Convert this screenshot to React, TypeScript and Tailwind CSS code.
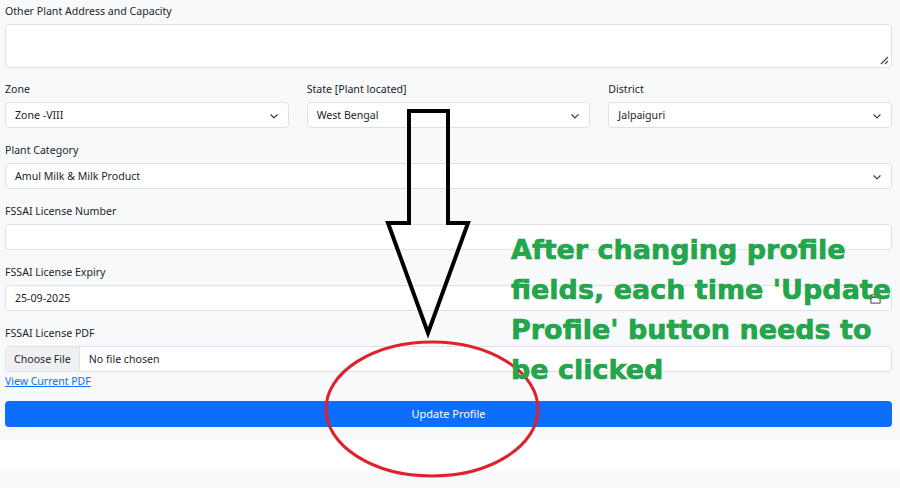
import React from "react";

const font = { fontFamily: '"Noto Sans", "Open Sans", sans-serif' };

function Label({ children }: { children: React.ReactNode }) {
  return <div className="h-[18px] leading-[18px] mb-[4px] text-[10.6px] text-[#212529]">{children}</div>;
}

function Chevron() {
  return (
    <svg width="10" height="10" viewBox="0 0 16 16" className="shrink-0">
      <path d="M3 6l5 5 5-5" fill="none" stroke="#343a40" strokeWidth="1.8" strokeLinecap="round" strokeLinejoin="round" />
    </svg>
  );
}

function Select({ value }: { value: string }) {
  return (
    <div className="h-[26px] bg-white border border-[#dee2e6] rounded-[4px] flex items-center justify-between pl-[9px] pr-[9px] pt-[1px] text-[10.6px] text-[#212529]">
      <span>{value}</span>
      <Chevron />
    </div>
  );
}

function Input({ value, children }: { value?: string; children?: React.ReactNode }) {
  return (
    <div className="h-[26px] bg-white border border-[#dee2e6] rounded-[4px] flex items-center justify-between pl-[9px] pr-[10px] pt-[1px] text-[10.6px] text-[#212529]">
      <span>{value}</span>
      {children}
    </div>
  );
}

export default function App() {
  return (
    <div className="relative w-[900px] h-[488px] overflow-hidden bg-white" style={font}>
      {/* Form card */}
      <div className="bg-[#f8f9fa] pt-[2px] pl-[5px] pr-[8px] pb-[12px] shadow-[0_1px_3px_rgba(0,0,0,0.15)]">
        <Label>Other Plant Address and Capacity</Label>
        <div className="relative h-[44px] bg-white border border-[#dee2e6] rounded-[4px]">
          <svg width="9" height="9" viewBox="0 0 9 9" className="absolute right-[2px] bottom-[2px]">
            <path d="M8 1L1 8M8 5L5 8" stroke="#444" strokeWidth="1.2" />
          </svg>
        </div>

        <div className="grid grid-cols-3 gap-x-[18px] mt-[12px]">
          <div>
            <Label>Zone</Label>
            <Select value="Zone -VIII" />
          </div>
          <div>
            <Label>State [Plant located]</Label>
            <Select value="West Bengal" />
          </div>
          <div>
            <Label>District</Label>
            <Select value="Jalpaiguri" />
          </div>
        </div>

        <div className="mt-[13px]">
          <Label>Plant Category</Label>
          <Select value="Amul Milk & Milk Product" />
        </div>

        <div className="mt-[13px]">
          <Label>FSSAI License Number</Label>
          <Input />
        </div>

        <div className="mt-[13px]">
          <Label>FSSAI License Expiry</Label>
          <Input value="25-09-2025">
            <svg width="11" height="11" viewBox="0 0 12 12">
              <rect x="1" y="2" width="10" height="9" fill="none" stroke="#333" strokeWidth="1" />
              <path d="M1 4.5h10" stroke="#333" strokeWidth="1.5" />
            </svg>
          </Input>
        </div>

        <div className="mt-[13px]">
          <Label>FSSAI License PDF</Label>
          <div className="h-[26px] bg-white border border-[#dee2e6] rounded-[4px] flex items-center text-[10.6px] text-[#212529] overflow-hidden">
            <div className="h-full flex items-center px-[8px] pt-[1px] bg-[#eef0f2] border-r border-[#dee2e6]">Choose File</div>
            <span className="pl-[9px] pt-[1px]">No file chosen</span>
          </div>
        </div>

        <div className="h-[18px] leading-[18px] text-[10.5px] text-[#0d6efd] underline">View Current PDF</div>

        <div className="mt-[11px] h-[26px] rounded-[4px] bg-[#0d6efd] flex items-center justify-center text-white text-[11px]">
          Update Profile
        </div>
      </div>

      <div className="h-[32px] bg-white" />
      <div className="h-[20px] bg-[#f8f9fa]" />

      {/* Annotation overlay */}
      <svg width="900" height="488" className="absolute inset-0 pointer-events-none">
        <path
          d="M409 111 H448 V223 H468 L428 333 L388 223 H409 Z"
          fill="none"
          stroke="#000"
          strokeWidth="4"
          strokeLinejoin="miter"
        />
        <ellipse cx="432" cy="409" rx="106" ry="67" fill="none" stroke="#e0202a" strokeWidth="3" />
      </svg>
      <div
        className="absolute left-[511px] top-[230px] text-[#22a84b] font-bold text-[27px] leading-[40px] [-webkit-text-stroke:0.6px_#1e9a45]"
        style={{ fontFamily: '"DejaVu Sans", Verdana, sans-serif' }}
      >
        After changing profile
        <br />
        fields, each time 'Update
        <br />
        Profile' button needs to
        <br />
        be clicked
      </div>
    </div>
  );
}
